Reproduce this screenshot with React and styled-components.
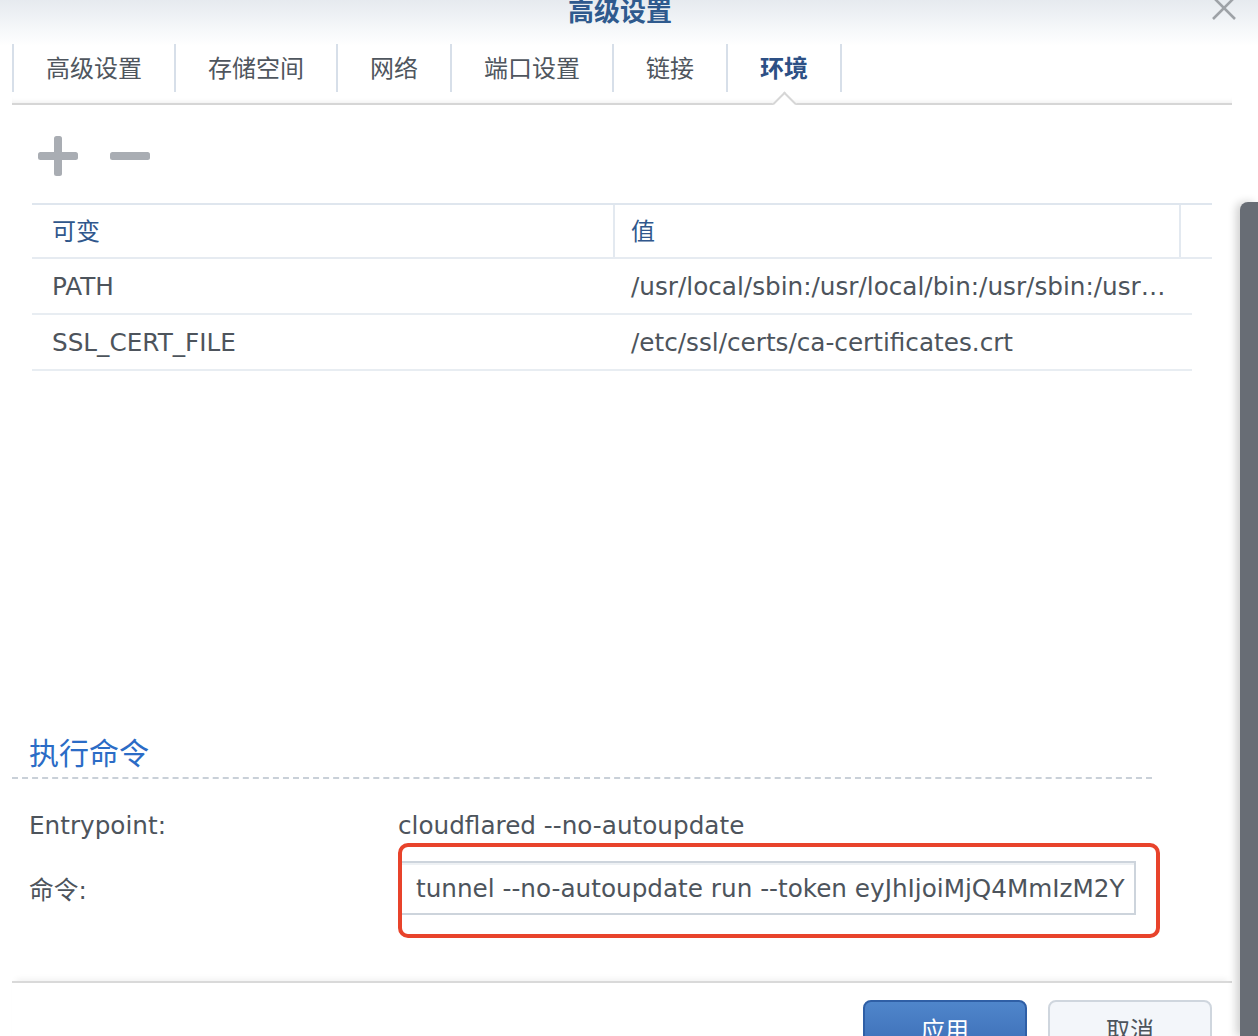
import styled, { createGlobalStyle } from "styled-components";
import * as React from "react";

const GlobalStyle = createGlobalStyle`
  html, body {
    margin: 0;
    padding: 0;
    background: #fff;
  }
  body {
    font-family: "DejaVu Sans", "Noto Sans CJK SC", sans-serif;
    color: #4d545c;
  }
`;

const tabs = ["高级设置", "存储空间", "网络", "端口设置", "链接", "环境"];

const envRows = [
  { name: "PATH", value: "/usr/local/sbin:/usr/local/bin:/usr/sbin:/usr/bin:/sbin:/bin" },
  { name: "SSL_CERT_FILE", value: "/etc/ssl/certs/ca-certificates.crt" },
];

export default function App() {
  return (
    <>
      <GlobalStyle />
      <Page>
        <Dialog>
          <Header>
            <span />
            <Title>高级设置</Title>
            <CloseBtn>
              <svg width="24" height="24" viewBox="0 0 24 24">
                <path d="M1 1 L23 23 M23 1 L1 23" stroke="#9ea2a7" strokeWidth="2.6" />
              </svg>
            </CloseBtn>
          </Header>

          <TabBar>
            {tabs.map((t, i) => (
              <Tab key={t} $active={i === tabs.length - 1} $last={i === tabs.length - 1}>
                {t}
              </Tab>
            ))}
          </TabBar>

          <Toolbar>
            <IconBtn>
              <svg width="40" height="40" viewBox="0 0 40 40">
                <rect x="0" y="16" width="40" height="8" rx="2.5" fill="#a9adb3" />
                <rect x="16" y="0" width="8" height="40" rx="2.5" fill="#a9adb3" />
              </svg>
            </IconBtn>
            <IconBtn>
              <svg width="40" height="40" viewBox="0 0 40 40">
                <rect x="0" y="16" width="40" height="8" rx="2.5" fill="#a9adb3" />
              </svg>
            </IconBtn>
          </Toolbar>

          <TableWrap>
            <HeadRow>
              <HeadCell>可变</HeadCell>
              <HeadCell $divider>值</HeadCell>
              <HeadCell $divider />
            </HeadRow>
            {envRows.map((r) => (
              <BodyRow key={r.name}>
                <Cell>{r.name}</Cell>
                <Cell $second>{r.value}</Cell>
              </BodyRow>
            ))}
          </TableWrap>

          <SectionTitle>执行命令</SectionTitle>

          <Form>
            <Label>Entrypoint:</Label>
            <Label>cloudflared --no-autoupdate</Label>
            <Label>命令:</Label>
            <InputWrap>
              <TextBox>tunnel --no-autoupdate run --token eyJhIjoiMjQ4MmIzM2Y</TextBox>
              <Highlight />
            </InputWrap>
          </Form>

          <Footer>
            <Button $primary>应用</Button>
            <Button>取消</Button>
          </Footer>
        </Dialog>
        <Rail>
          <DarkPanel />
        </Rail>
      </Page>
    </>
  );
}

const Page = styled.div`
  display: flex;
  align-items: stretch;
  height: 1036px;
  overflow: hidden;
  background: linear-gradient(to bottom, #e6eaef 0, #f6f8fa 30px, #fff 46px);
`;

const Dialog = styled.div`
  width: 1240px;
  flex-shrink: 0;
`;

const Header = styled.div`
  height: 44px;
  display: grid;
  grid-template-columns: 1fr auto 1fr;
  align-items: start;
`;

const Title = styled.div`
  margin-top: -3px;
  font-size: 26px;
  line-height: 26px;
  font-weight: 700;
  color: #2f5a8e;
  font-family: "Noto Sans CJK SC", sans-serif;
`;

const CloseBtn = styled.div`
  justify-self: end;
  margin-top: -4px;
  margin-right: 4px;
  width: 24px;
  height: 24px;
`;

const TabBar = styled.div`
  display: flex;
  margin: 0 8px 0 12px;
  padding-bottom: 11px;
  border-bottom: 2px solid #d6d6d6;
  box-shadow: inset 0 -5px 5px -4px rgba(0, 0, 0, 0.07);
`;

const Tab = styled.div`
  position: relative;
  box-sizing: border-box;
  height: 48px;
  padding: 0 32px 3px;
  display: flex;
  align-items: center;
  border-left: 2px solid #d7dfe9;
  border-right: ${(p) => (p.$last ? "2px solid #d7dfe9" : "none")};
  font-family: "Noto Sans CJK SC", sans-serif;
  font-size: 24px;
  font-weight: ${(p) => (p.$active ? 700 : 400)};
  color: ${(p) => (p.$active ? "#2d5085" : "#4f565e")};

  &::after {
    content: "";
    display: ${(p) => (p.$active ? "block" : "none")};
    position: absolute;
    z-index: 1;
    left: calc(50% - 8px);
    top: 51px;
    width: 17px;
    height: 17px;
    background: #fff;
    border-top: 2px solid #d6d6d6;
    border-left: 2px solid #d6d6d6;
    box-sizing: border-box;
    transform: rotate(45deg);
  }
`;

const Toolbar = styled.div`
  display: flex;
  gap: 32px;
  margin: 31px 0 0 38px;
`;

const IconBtn = styled.div`
  width: 40px;
  height: 40px;
  display: flex;
`;

const TableWrap = styled.div`
  margin: 27px 0 0 32px;
  width: 1180px;
  height: 528px;
`;

const HeadRow = styled.div`
  display: grid;
  grid-template-columns: 581px 566px 1fr;
  height: 52px;
  border-top: 2px solid #dfe6ee;
  border-bottom: 2px solid #e6ebf1;
`;

const HeadCell = styled.div`
  display: flex;
  align-items: center;
  padding-left: ${(p) => (p.$divider ? "16px" : "20px")};
  padding-bottom: 3px;
  border-left: ${(p) => (p.$divider ? "2px solid #e3e9f0" : "none")};
  font-size: 24px;
  color: #30578c;
  font-family: "Noto Sans CJK SC", sans-serif;
`;

const BodyRow = styled.div`
  display: grid;
  grid-template-columns: 581px 1fr;
  width: 1160px;
  height: 54px;
  border-bottom: 2px solid #e8edf2;
`;

const Cell = styled.div`
  min-width: 0;
  padding-left: ${(p) => (p.$second ? "18px" : "20px")};
  padding-right: 24px;
  font-size: 24.7px;
  line-height: 56px;
  color: #4d545c;
  white-space: nowrap;
  overflow: hidden;
  text-overflow: ellipsis;
`;

const SectionTitle = styled.div`
  margin-left: 12px;
  width: 1123px;
  padding: 0 0 6px 17px;
  font-family: "Noto Sans CJK SC", sans-serif;
  font-size: 30px;
  line-height: 40px;
  color: #2b6cc6;
  border-bottom: 2px dashed #c9d0d8;
`;

const Form = styled.div`
  display: grid;
  grid-template-columns: 369px 738px;
  grid-template-rows: 40px 54px;
  row-gap: 16px;
  margin: 26px 0 0 29px;
`;

const Label = styled.div`
  display: flex;
  align-items: center;
  font-size: 24.7px;
  color: #4d545c;
  white-space: nowrap;
`;

const InputWrap = styled.div`
  position: relative;
`;

const TextBox = styled.div`
  box-sizing: border-box;
  height: 54px;
  padding: 0 6px 0 16px;
  display: flex;
  align-items: center;
  border: 2px solid #cdd4dc;
  box-shadow: inset 0 2px 0 #eef1f4;
  background: #fff;
  font-size: 24.7px;
  color: #4d545c;
  white-space: nowrap;
  overflow: hidden;
`;

const Highlight = styled.div`
  position: absolute;
  left: 0;
  top: -18px;
  right: -24px;
  bottom: -23px;
  border: 4px solid #e8432b;
  border-radius: 10px;
  pointer-events: none;
`;

const Footer = styled.div`
  display: flex;
  justify-content: flex-end;
  gap: 21px;
  margin: 66px 8px 0 12px;
  padding: 17px 20px 0 0;
  border-top: 2px solid #d9d9d9;
  box-shadow: 0 -6px 6px -4px rgba(0, 0, 0, 0.06);
`;

const Button = styled.div`
  box-sizing: border-box;
  width: 164px;
  height: 56px;
  display: flex;
  align-items: center;
  justify-content: center;
  border-radius: 8px;
  font-family: "Noto Sans CJK SC", sans-serif;
  font-size: 24px;
  border: 2px solid ${(p) => (p.$primary ? "#2f5fa6" : "#cfd6de")};
  background: ${(p) =>
    p.$primary ? "linear-gradient(to bottom, #4f86cb, #3b6cb5)" : "#f3f6fa"};
  color: ${(p) => (p.$primary ? "#fff" : "#4d545c")};
`;

const Rail = styled.div`
  flex: 1;
  padding-top: 202px;
  display: flex;
`;

const DarkPanel = styled.div`
  flex: 1;
  background: #686d75;
  border-top-left-radius: 8px;
  box-shadow: -4px 0 8px rgba(0, 0, 0, 0.18);
`;
